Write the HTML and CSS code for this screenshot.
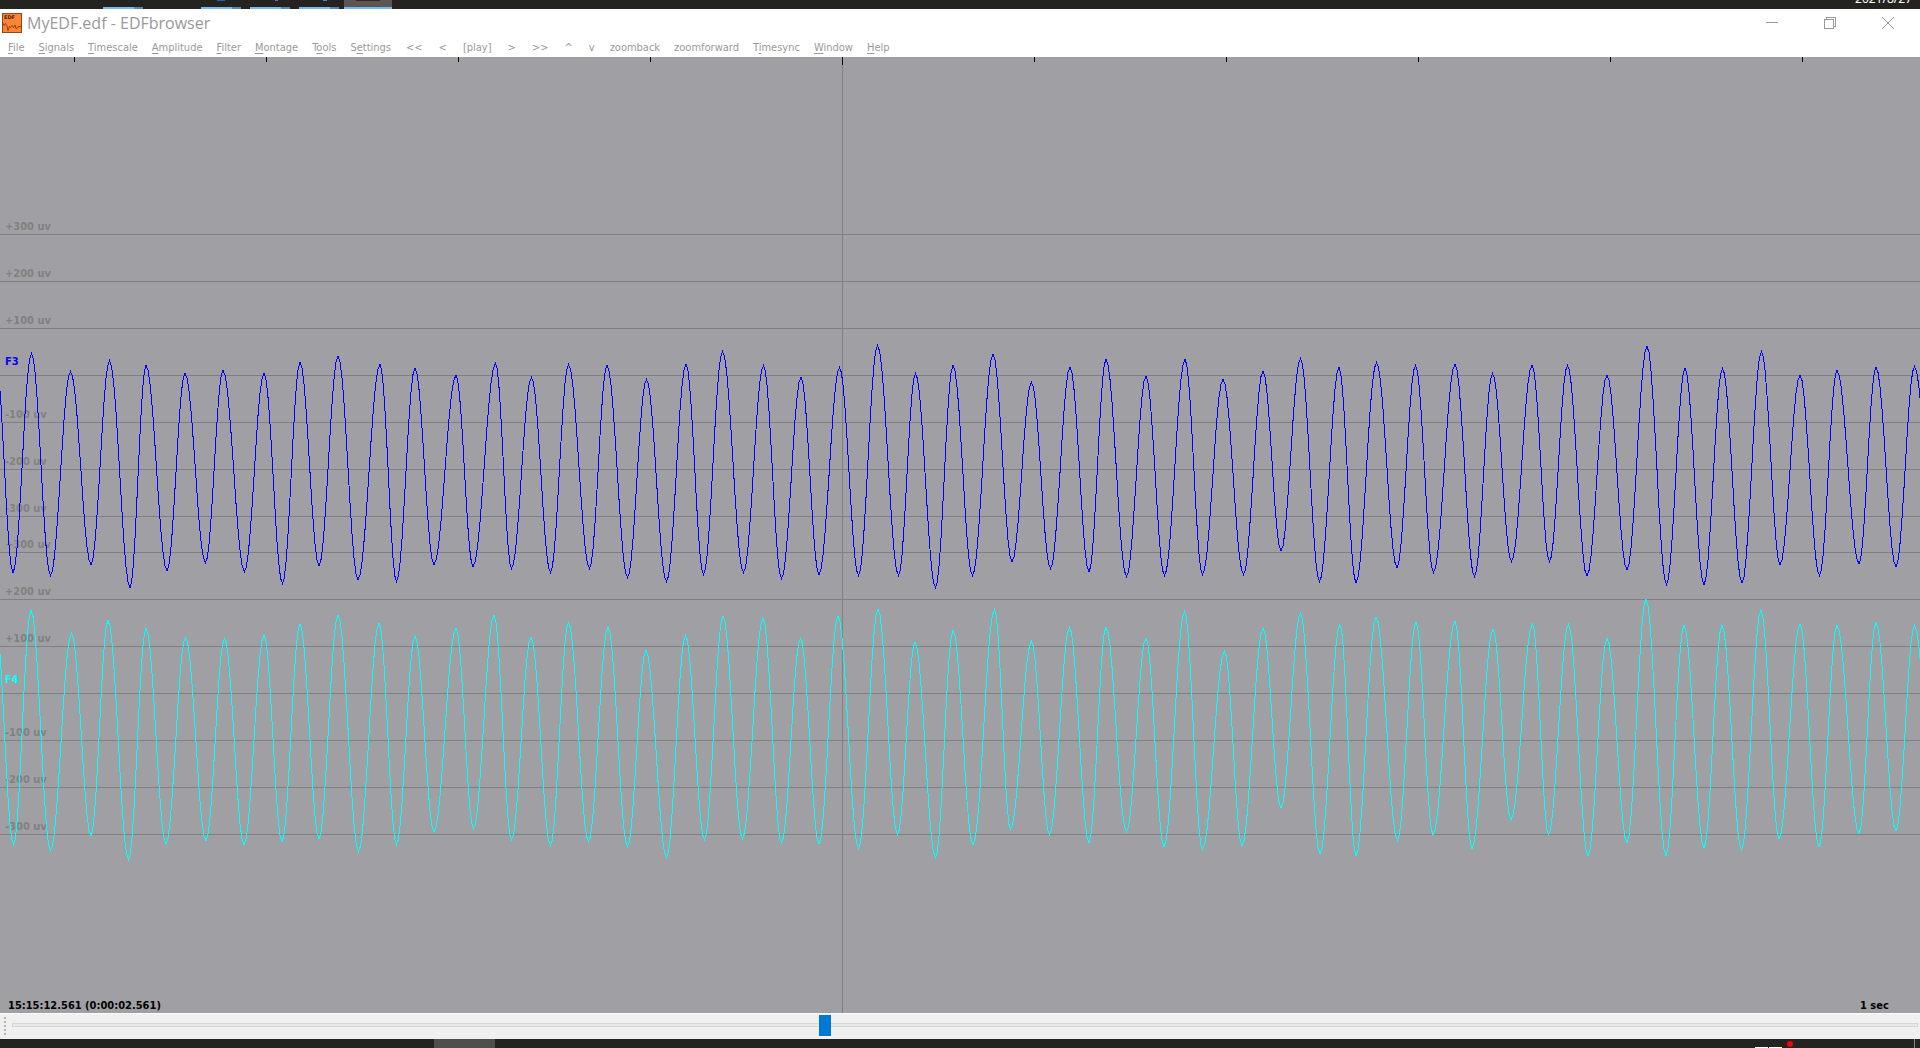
FILE: index.html
```html
<!DOCTYPE html>
<html lang="en">
<head>
<meta charset="utf-8">
<title>MyEDF.edf - EDFbrowser</title>
<link rel="stylesheet" href="styles.css">
</head>
<body>
<div class="taskbar taskbar-top">
  <div class="tasks">
    <span class="task task-first"></span>
    <span class="task task-blue"></span>
    <span class="task task-purple"></span>
    <span class="task task-cyan"></span>
    <span class="task-active"></span>
  </div>
  <span class="date">2021/8/27</span>
</div>

<header class="titlebar">
  <svg class="app-icon" viewBox="0 0 20 20" aria-hidden="true">
    <rect x=".5" y=".5" width="19" height="19" fill="#ff8432" stroke="#8a4a20"/>
    <text x="2" y="6" class="app-icon-text">EDF</text>
    <path d="M.5 9.500l1.500 3 1.500-2 1.500 2.500 1 4.500 1.500-4 1 1 1.500-2 1.500 2 1.500-2.500 1 3.500 1.500-.5 1.500-2 1 1 2-1.500" fill="none" stroke="#6b3514" stroke-width=".8"/>
  </svg>
  <h1 class="title">MyEDF.edf - EDFbrowser</h1>
  <div class="window-buttons">
    <button type="button" class="window-button" aria-label="Minimize"><svg class="window-glyph" viewBox="0 0 12 12"><path d="M0 5.5h12"/></svg></button>
    <button type="button" class="window-button" aria-label="Restore"><svg class="window-glyph" viewBox="0 0 12 12"><path d="M.5 2.5h9v9h-9zM2.500 2.500v-2h9v9h-2"/></svg></button>
    <button type="button" class="window-button" aria-label="Close"><svg class="window-glyph smooth" viewBox="0 0 12 12"><path d="M0 0l12 12M12 0L0 12"/></svg></button>
  </div>
</header>

<nav class="menubar">
  <button type="button" class="menu"><u>F</u>ile</button>
  <button type="button" class="menu"><u>S</u>ignals</button>
  <button type="button" class="menu"><u>T</u>imescale</button>
  <button type="button" class="menu"><u>A</u>mplitude</button>
  <button type="button" class="menu"><u>F</u>ilter</button>
  <button type="button" class="menu"><u>M</u>ontage</button>
  <button type="button" class="menu">T<u>o</u>ols</button>
  <button type="button" class="menu">S<u>e</u>ttings</button>
  <button type="button" class="menu step">&lt;&lt;</button>
  <button type="button" class="menu step">&lt;</button>
  <button type="button" class="menu step">[play]</button>
  <button type="button" class="menu step">&gt;</button>
  <button type="button" class="menu step">&gt;&gt;</button>
  <button type="button" class="menu step">^</button>
  <button type="button" class="menu step">v</button>
  <button type="button" class="menu">zoomback</button>
  <button type="button" class="menu">zoomforward</button>
  <button type="button" class="menu">T<u>i</u>mesync</button>
  <button type="button" class="menu"><u>W</u>indow</button>
  <button type="button" class="menu"><u>H</u>elp</button>
</nav>

<main class="plot">
  <svg class="plot-canvas" id="plot" role="img" aria-label="Signals F3 and F4"></svg>
</main>

<footer class="slider-bar">
  <span class="grip"></span>
  <input class="position" type="range" min="0" max="1000" value="426" aria-label="File position">
</footer>

<div class="taskbar taskbar-bottom">
  <span class="bottom-task"></span>
  <div class="tray">
    <span class="tray-tile"></span>
    <span class="tray-tile"></span>
    <svg class="tray-dot" viewBox="0 0 6 6"><circle cx="3" cy="3" r="3" fill="#f00"/></svg>
    <span class="tray-edge"></span>
  </div>
</div>
<script src="plot.js"></script>
</body>
</html>
```
FILE: styles.css
```css
* { box-sizing: border-box; }

body {
  margin: 0;
  height: 100vh;
  display: flex;
  flex-direction: column;
  overflow: hidden;
  background: #fff;
  font-family: "DejaVu Sans Condensed", "DejaVu Sans", sans-serif;
  font-size: 11px;
}

/* Desktop taskbars peeking out above and below the window */
.taskbar {
  flex: none;
  display: flex;
  justify-content: space-between;
  height: 9px;
  overflow: hidden;
  background: #242320;
}
.tasks { display: flex; padding-left: 103px; }
.task {
  width: 40px;
  margin-right: 9px;
  background: linear-gradient(90deg, #76b9ed 31px, #5888b0 31px) bottom / 100% 2px no-repeat;
}
.task-first { margin-right: 58px; }
.task-blue, .task-purple, .task-cyan { display: flex; justify-content: center; }
.task-blue::before, .task-purple::before, .task-cyan::before { content: ""; height: 1px; }
.task-blue::before { width: 8px; background: #0a6fc0; }
.task-purple::before { width: 3px; margin-left: 12px; background: #8a5cc0; }
.task-cyan::before { width: 4px; margin-left: 12px; background: #1a98d8; }
.task-cyan { margin-right: 5px; }
.task-active {
  width: 48px;
  border-bottom: 2px solid #76b9ed;
  background: linear-gradient(#4a2410, #4a2410) top / 24px 1px no-repeat #595653;
}
.date {
  padding-right: 8px;
  color: #fff;
  font: 12px/12px "Noto Sans", sans-serif;
  margin-top: -7px;
}

.titlebar { flex: none; display: flex; height: 29px; padding: 0 3px 0 2px; }
.app-icon { width: 20px; height: 20px; margin-top: 4px; }
.app-icon-text { font: bold 5px "DejaVu Sans", sans-serif; fill: #4a240c; }
.title {
  flex: 1;
  margin: 0 0 0 5px;
  color: #999;
  font: 16px/29px "Open Sans", "Noto Sans", sans-serif;
}
.window-buttons { display: flex; }
.window-button {
  display: flex;
  justify-content: center;
  width: 58px;
  padding: 8px 0 0;
  border: 0;
  background: none;
}
.window-glyph {
  width: 12px;
  height: 12px;
  fill: none;
  stroke: #999;
  shape-rendering: crispEdges;
}
.window-glyph.smooth { shape-rendering: auto; }

.menubar { flex: none; display: flex; height: 19px; padding-left: 1px; }
.menu {
  padding: 0 7px;
  border: 0;
  background: none;
  color: #999;
  font: inherit;
  line-height: 19px;
  white-space: pre;
}
.menu.step { padding: 0 8px; }
.menu u { text-underline-offset: 2px; }

.plot { flex: 1; min-height: 0; background: #a0a0a4; }
.plot-canvas { display: block; width: 100%; height: 100%; font-weight: bold; }
.grid { stroke: #808080; shape-rendering: crispEdges; }
.grid-label { fill: #808080; }
.tick { stroke: #000; shape-rendering: crispEdges; }
.time-label { fill: #000; }
.trace { fill: none; shape-rendering: crispEdges; }
.trace-f3 { stroke: #00f; }
.trace-f4 { stroke: #0ff; }
.label-f3 { fill: #00f; }
.label-f4 { fill: #0ff; }

.slider-bar {
  flex: none;
  display: flex;
  align-items: flex-start;
  height: 26px;
  padding: 0 2px 0 4px;
  border-top: 1px solid #fff;
  background: #f0f0f0;
}
.grip {
  width: 2px;
  height: 20px;
  margin: 3px 6px 0 0;
  background: repeating-linear-gradient(#b4b4b4 0 2px, #f0f0f0 2px 4px);
}
.position {
  flex: 1;
  height: 20px;
  margin: 1px 0 0;
  appearance: none;
  background: none;
}
.position::-webkit-slider-runnable-track {
  height: 4px;
  border: 1px solid #d6d6d6;
  background: #e7eaea;
}
.position::-webkit-slider-thumb {
  appearance: none;
  width: 12px;
  height: 21px;
  margin-top: -9px;
  background: #0078d7;
}

.bottom-task { width: 61px; margin-left: 434px; background: #504f4b; }
.tray { display: flex; align-items: flex-end; padding-right: 5px; }
.tray-tile { width: 13px; height: 1px; margin-right: 1px; background: #fff; }
.tray-dot { width: 6px; height: 6px; margin: 0 121px 1px 4px; }
.tray-edge { width: 1px; height: 9px; background: #8a8886; }
```
FILE: plot.js
```js
// Turning points of each signal as "x y" pairs, on a 1920 wide grid
// whose y values count from the top of the window.
const PLOT_TOP = 57;
const PLOT_WIDTH = 1920;
const PLOT_HEIGHT = 956;

const F3 = `-5 356 12.5 572 31 353 50 575 70 371 90.5 564 109 360 129.5 587 145.5 365 166.5 570
184.5 373 205 562 222.5 370 244 571 263.5 373 282 583 299.5 362 318.5 565 337.5 356 357.5 579
379.5 364 396 581 414.5 368 433.5 564 455.5 375 472.5 566 495 363 511 568 531 377 550 572
568 364 589 568 606.5 365 627 577 646 379 666 581 685.5 364 703 574 722 351 743 572
763 365 781 578 800.5 377 818.5 574 839 367 858 575 877 345 898 575 915 373 935 587
952.5 365 972 575 992.5 354 1011.5 561 1031 382 1050 568 1069.5 367 1088.5 571 1105.5 359 1126 576
1145.5 376 1164 575 1184.5 359 1202 574 1222.5 379 1243 574 1262.5 371 1280.5 550 1300 358 1319 581
1338.5 367 1355.5 582 1376 362 1396.5 567 1415 365 1433 572 1454.5 364 1474 576 1492 373 1511 561
1531.5 365 1549 561 1567 365 1586.5 575 1606.5 375 1626.5 569 1646.5 346 1666 584 1684.5 368 1703.5 584
1722 368 1741.5 582 1761 351 1779.5 564 1799.5 375 1819 575 1836.5 370 1858.5 563 1875.5 367 1895.5 566
1914 366 1936 575`;

const F4 = `-5 620 13 844 30.5 610 50 850 71 633 90.5 835 107.5 620 128 859 145.5 628 165.5 843
185 637 205.5 840 224 638 243.5 844 263.5 635 281.5 841 299.5 624 318.5 838 337.5 615 358 851
378.5 623 396 844 414.5 636 433.5 831 455.5 628 473 828 493.5 615 511 839 530.5 637 550 845
568 622 588 841 607.5 627 627 846 645.5 650 666 857 685 635 704 839 722.5 616 742 838
762.5 618 781 842 800 638 818.5 843 837.5 616 858 848 877.5 609 897 834 914.5 642 935 857
952.5 630 972.5 844 994 609 1010 829 1031 641 1049 834 1069 627 1088.5 842 1105.5 627 1126 831
1145.5 638 1163.5 846 1184 611 1202 849 1224 651 1241.5 845 1262.5 628 1280.5 807 1300 613 1319.5 853
1339.5 624 1355.5 855 1375.5 617 1397 840 1415.5 622 1432.5 834 1454.5 621 1471.5 848 1492.5 629 1510.5 819
1532 624 1548 834 1568 624 1587.5 855 1606.5 638 1626.5 842 1645.5 599 1665.5 855 1683.5 625 1703.5 847
1721.5 625 1741 849 1760.5 610 1778.5 838 1799.5 624 1818.5 846 1836.5 625 1858.5 833 1875.5 622 1895.5 830
1914 625 1936 846`;

const LEVELS = [
  [234, '+300 uv'], [281, '+200 uv'], [328, '+100 uv'], [375, ''],
  [422, '-100 uv'], [469, '-200 uv'], [516, '-300 uv'],
  [552, '+300 uv'], [599, '+200 uv'], [646, '+100 uv'], [693, ''],
  [740, '-100 uv'], [787, '-200 uv'], [834, '-300 uv']
];

const svg = document.getElementById('plot');

function add(name, attributes, text) {
  const node = document.createElementNS('http://www.w3.org/2000/svg', name);
  for (const key in attributes) node.setAttribute(key, attributes[key]);
  if (text) node.textContent = text;
  svg.appendChild(node);
}

function draw() {
  const width = svg.clientWidth;
  const height = svg.clientHeight;
  const sx = x => x * width / PLOT_WIDTH;
  const sy = y => (y - PLOT_TOP) * height / PLOT_HEIGHT;
  const px = v => Math.round(v) + 0.5;

  // Half a cosine between each pair of neighbouring turning points
  const wave = data => {
    const v = data.split(/\s+/).map(Number);
    const points = [];
    for (let i = 0; i + 3 < v.length; i += 2) {
      const [x0, y0, x1, y1] = v.slice(i, i + 4);
      for (let k = 0; k < 10; k++) {
        const t = k / 10;
        const y = y0 + (y1 - y0) * (1 - Math.cos(Math.PI * t)) / 2;
        points.push((sx(x0 + (x1 - x0) * t) + 0.5).toFixed(1) + ',' + (sy(y) + 0.5).toFixed(1));
      }
    }
    return points.join(' ');
  };

  svg.replaceChildren();

  for (const [level, label] of LEVELS) {
    const y = px(sy(level));
    add('line', { class: 'grid', x1: 0, x2: width, y1: y, y2: y });
    if (label) add('text', { class: 'grid-label', x: 5, y: Math.floor(y) - 4 }, label);
  }

  const middle = px(sx(842));
  add('line', { class: 'grid', x1: middle, x2: middle, y1: 0, y2: height });
  for (let i = 0; i < 10; i++) {
    const x = px(sx(74 + i * 192));
    add('line', { class: 'tick', x1: x, x2: x, y1: 0, y2: i === 4 ? 8 : 5 });
  }

  add('polyline', { class: 'trace trace-f3', points: wave(F3) });
  add('polyline', { class: 'trace trace-f4', points: wave(F4) });
  add('text', { class: 'label-f3', x: 5, y: Math.round(sy(365)) }, 'F3');
  add('text', { class: 'label-f4', x: 5, y: Math.round(sy(683)) }, 'F4');

  add('text', { class: 'time-label', x: 8, y: height - 4 }, '15:15:12.561 (0:00:02.561)');
  add('text', { class: 'time-label', x: width - 60, y: height - 4 }, '1 sec');
}

draw();
window.addEventListener('resize', draw);
```
